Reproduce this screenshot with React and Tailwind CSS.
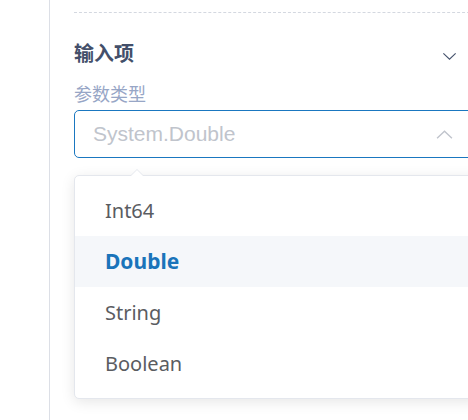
import { useState } from "react";

const options = ["Int64", "Double", "String", "Boolean"];

const Chevron = ({ up, className }) => (
  <svg viewBox="0 0 16 8" className={className} fill="none" stroke="currentColor" strokeWidth="1.3">
    {up ? <path d="M1 7.5 L8 1 L15 7.5" /> : <path d="M1 0.5 L8 7 L15 0.5" />}
  </svg>
);

const App = () => {
  const [selected] = useState("Double");

  return (
    <div className="flex h-[420px] w-[468px] overflow-hidden bg-white font-['Noto_Sans','Noto_Sans_CJK_SC',sans-serif]">
      <div className="w-[50px] shrink-0 border-r border-[#dcdfe6]" />

      <div className="relative w-[430px] shrink-0 pl-[24px] pt-[12px]">
        <div className="border-t border-dashed border-[#d4d8e0]" />

        <div className="mt-[27px] flex h-[28px] items-center justify-between pr-[23px]">
          <span className="text-[20px] font-bold leading-[28px] text-[#434f6a]">输入项</span>
          <Chevron className="mt-[4px] h-[7px] w-[15px] text-[#45526c]" />
        </div>

        <div className="mt-[14px] text-[18px] leading-[24px] text-[#97a6c6]">参数类型</div>

        <div className="relative mt-[4px]">
          <div className="flex h-[48px] items-center justify-between rounded-[5px] border border-[#1a77c0] pl-[18px] pr-[26px]">
            <span className="font-['Liberation_Sans',sans-serif] text-[21px] text-[#c0c4cc]">System.Double</span>
            <Chevron up className="h-[9px] w-[17px] text-[#c0c4cc]" />
          </div>

          <div className="absolute left-0 right-0 top-[65px] rounded-[5px] border border-[#e4e7ed] bg-white py-[9px] shadow-[0_3px_14px_rgba(0,0,0,0.1)]">
            <div className="absolute -top-[7px] left-[55px] h-0 w-0 border-x-[7px] border-b-[7px] border-x-transparent border-b-[#e4e7ed]" />
            <div className="absolute -top-[6px] left-[56px] h-0 w-0 border-x-[6px] border-b-[6px] border-x-transparent border-b-white" />
            {options.map((opt) => (
              <div
                key={opt}
                className={`flex h-[51px] items-center pl-[30px] text-[20px] ${
                  opt === selected ? "bg-[#f5f7fa] text-[21px] font-bold text-[#1a74ba]" : "text-[#5a5c61]"
                }`}
              >
                {opt}
              </div>
            ))}
          </div>
        </div>
      </div>
    </div>
  );
};

export default App;
